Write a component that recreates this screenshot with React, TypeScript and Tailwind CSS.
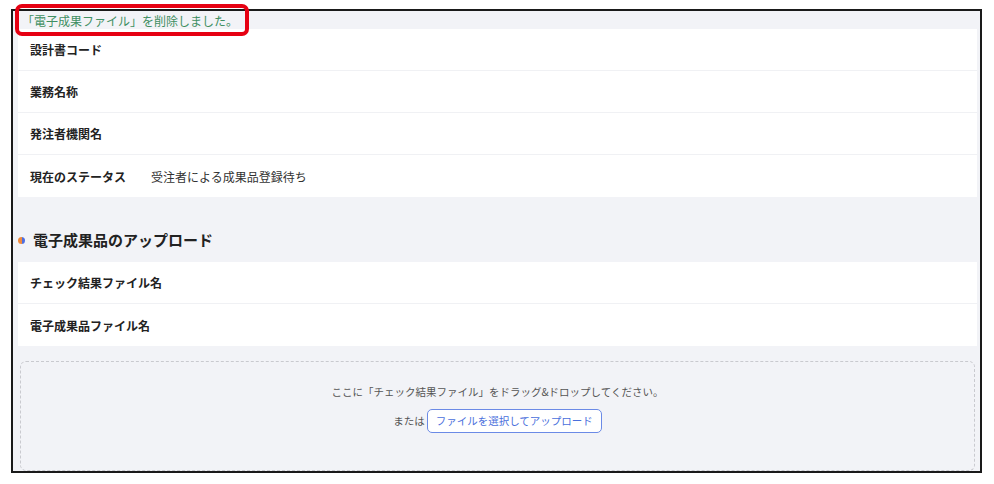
const rowsTop = [
  { label: "設計書コード", value: "" },
  { label: "業務名称", value: "" },
  { label: "発注者機関名", value: "" },
  { label: "現在のステータス", value: "受注者による成果品登録待ち" },
];

const rowsUpload = [
  { label: "チェック結果ファイル名", value: "" },
  { label: "電子成果品ファイル名", value: "" },
];

const InfoTable = ({ rows }: { rows: { label: string; value: string }[] }) => {
  return (
    <div className="bg-white mx-[5px] mr-[3px] divide-y divide-[#f0f1f4]">
      {rows.map((r) => (
        <div key={r.label} className="flex items-center h-[42px] px-[12px] pt-[1px] text-[12px]">
          <span className="font-bold text-[#222] min-w-[121px] whitespace-nowrap">{r.label}</span>
          <span className="text-[#333] whitespace-nowrap">{r.value}</span>
        </div>
      ))}
    </div>
  );
};

const App = () => {
  return (
    <div
      className="relative w-[994px] h-[484px] bg-white"
      style={{ fontFamily: '"Noto Sans CJK JP", "Noto Sans", sans-serif' }}
    >
      <div className="absolute left-[11px] top-[9px] w-[971px] h-[464px] border-2 border-[#1a1a1a] bg-[#f2f3f7] overflow-hidden">
        <div className="h-[18px] pl-[9px] pt-[2px] flex items-center text-[12px] text-[#3f8f62]">
          「電子成果ファイル」を削除しました。
        </div>
        <InfoTable rows={rowsTop} />

        {/* section heading */}
        <div className="flex items-center gap-[8px] pl-[5px] mt-[32px] h-[22px]">
          <span className="w-[7px] h-[7px] rounded-full bg-[linear-gradient(90deg,#f08a3c_50%,#4f6fe0_50%)]" />
          <span className="text-[15px] font-bold text-[#222]">電子成果品のアップロード</span>
        </div>
        <div className="mt-[11px]">
          <InfoTable rows={rowsUpload} />
        </div>

        {/* drop area */}
        <div className="mx-[7px] mr-[5px] mt-[15px] h-[110px] border border-dashed border-[#c9cacf] rounded-[6px] flex flex-col items-center pt-[22px]">
          <p className="text-[10.5px] text-[#555]">ここに「チェック結果ファイル」をドラッグ&ドロップしてください。</p>
          <div className="flex items-center gap-[2px] mt-[9px] text-[10.5px]">
            <span className="text-[#555]">または</span>
            <button className="h-[24px] px-[8px] border border-[#6b8ae6] rounded-[5px] bg-white text-[#4a6fdc]">
              ファイルを選択してアップロード
            </button>
          </div>
        </div>
      </div>

      {/* red callout around the notice */}
      <div className="absolute left-[15px] top-[4px] w-[234px] h-[32px] border-[4px] border-[#e60012] rounded-[7px]" />
    </div>
  );
};

export default App;
